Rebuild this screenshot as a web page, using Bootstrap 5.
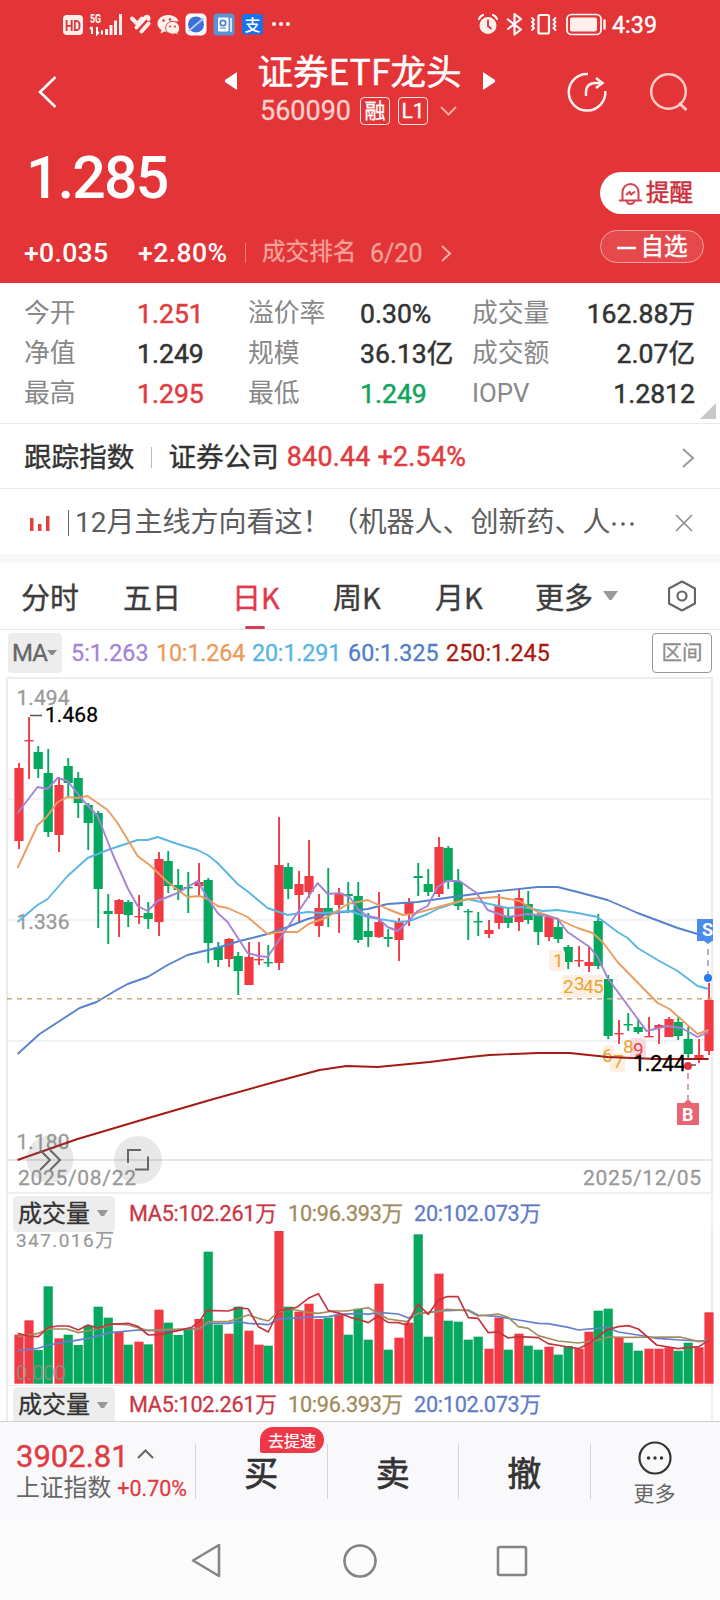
<!DOCTYPE html>
<html lang="zh-CN">
<head>
<meta charset="utf-8">
<meta name="viewport" content="width=device-width, initial-scale=1">
<title>证券ETF龙头 560090</title>
<link href="https://cdn.jsdelivr.net/npm/bootstrap@5.3.0/dist/css/bootstrap.min.css" rel="stylesheet">
<style>
  :root { --rise:#e33437; --up:#f23a44; --down:#04a95f; --ink:#333; --dim:#888; --line:#e9e9ea; }
  body { width:720px; height:1600px; overflow:hidden; background:#fff; color:var(--ink);
         font-family:Roboto,"Noto Sans CJK SC",sans-serif; line-height:1; white-space:nowrap; }
  svg { display:block; flex:none; }
  .quote-head { height:283px; background:var(--rise); }
  .statusbar { height:48px; padding-left:55px; }
  .titlebar { height:85px; }
  .etf-name { font:400 35.6px/42px "Noto Sans CJK SC",sans-serif; -webkit-text-stroke:.5px currentColor; }
  .etf-code { font-size:27px; color:#ffd0cc; -webkit-text-stroke:.3px currentColor; }
  .tagbox { width:30px; height:28px; border:1px solid #ffe3e0; border-radius:4px; font-size:21px; -webkit-text-stroke:.3px currentColor; }
  .last-price { font-size:59px; font-weight:500; letter-spacing:-1.8px; line-height:60px; }
  .chg { font-size:26.6px; font-weight:500; }
  .rank { font-size:23.6px; color:#f7a19b; -webkit-text-stroke:.3px currentColor; }
  .pill-remind { width:120px; height:42px; border-radius:21px 0 0 21px; color:#c8313b; font-size:23.5px; -webkit-text-stroke:.5px currentColor; }
  .pill-fav { width:104px; height:33px; border:1px solid #f3a4a2; background:#e5494c; border-radius:17px; font-size:23.5px; -webkit-text-stroke:.5px currentColor; }
  .stats { height:141px; padding:11px 25px 0 24px; border-bottom:1px solid var(--line); grid-template-columns:113px 111px 112px 112px 1fr; grid-auto-rows:40px; }
  .stats > * { font-size:25.8px; }
  .stats .lbl { color:var(--dim); }
  .stats .val { font-size:26.6px; }
  .stats .val, .idx-val { font-weight:400; -webkit-text-stroke:.5px currentColor; }
  .rise { color:#e23b3f; } .fall { color:#12a35d; }
  .indexrow { height:65px; padding:3px 26px 0 24px; border-bottom:1px solid var(--line); font-size:27.6px; -webkit-text-stroke:.4px currentColor; }
  .newsrow { height:65px; padding:2px 27px 0 29px; font-size:28px; color:#5c5c5c; }
  .band { height:9px; background:#f7f7f8; }
  .tabs { height:67px; border-bottom:1px solid var(--line); font:400 29px/1 "Noto Sans CJK SC",sans-serif; color:#3d3d3d; -webkit-text-stroke:.4px currentColor;
          display:grid; grid-template-columns:101px 101px 100px 100px 101px 133px 1fr; padding-left:21px; }
  .tabs .on { color:#e2394a; position:relative; }
  .tabs .on::after { content:""; position:absolute; left:22px; bottom:0; width:20px; height:3px; border-radius:2px; background:#cf4258; }
  .marow { height:47px; padding:0 8px 1px; font-size:23.2px; letter-spacing:-.1px; }
  .marow > span { -webkit-text-stroke:.3px currentColor; }
  .mabox { width:54px; height:40px; background:#ededed; border-radius:4px; color:#666; font-size:24px; letter-spacing:-.8px; }
  .zonebox { width:60px; height:40px; border:1px solid #999; border-radius:4px; color:#8c8c8c; font-size:20.5px; }
  .volhead { height:37px; padding-left:13px; padding-top:2px; margin:0 7px 0 6px; border-left:2px solid #eee; border-right:2px solid #eee; font-size:21.6px; letter-spacing:-.25px; -webkit-text-stroke:.3px currentColor; }
  .volbox { width:102px; height:36px; background:#ededed; border-radius:4px; font-size:24px; padding-left:5px; letter-spacing:0; margin-left:-8px; }
  .tradebar { height:100px; background:#f9f9fc; border-top:1px solid #d0d0d2; }
  .tradebar .cell { width:131.5px; border-left:1px solid #d5d5d9; height:55px; font:400 34px/1 "Noto Sans CJK SC",sans-serif; -webkit-text-stroke:.7px currentColor; }
  .tradebar .cell .thin { -webkit-text-stroke:0; }
  .speedtag { position:absolute; left:64px; top:-17px; width:64px; height:26px; background:#ee3747; border-radius:13px 13px 13px 2px; color:#fff; font-size:16px; -webkit-text-stroke:.2px currentColor; }
  .sysnav { height:79px; background:#fcfcfc; }
  svg text { font-family:Roboto,"Noto Sans CJK SC",sans-serif; }
</style>
</head>
<body>
<header class="quote-head text-white d-flex flex-column">
  <div class="statusbar d-flex">
    <svg width="250" height="48" viewBox="55 0 250 48">
      <rect x="63" y="15" width="20" height="20" rx="4" fill="#fff0ec"/>
      <text x="65" y="30.500" font-size="14.500" font-weight="700" fill="#d9363a" textLength="16" lengthAdjust="spacingAndGlyphs">HD</text>
      <text x="90" y="23" font-size="12" font-weight="700" fill="#fff" textLength="11" lengthAdjust="spacingAndGlyphs">5G</text>
      <g stroke="#fff" fill="none" stroke-width="2"><path d="M92 27v7M90 29l2-2M97 27v7l2-2M102 30.500v4"/><path stroke-width="3" d="M106.500 29v6M111 25v10M115.500 20.500v14.500M120.500 14v21" opacity=".92"/></g>
      <g fill="none" stroke="#fff0ec" stroke-width="4" stroke-linecap="round" stroke-linejoin="round"><path d="M132 18.500l5.500 5.500 4.500-5.500M136.500 27.500l9-10q3-2 3 1.500M141.500 31.500l7-8"/></g>
      <g fill="#fff0ec"><path d="M168 15c-6 0-10.500 4-10.500 8.500 0 3 1.500 5 4 6.500l-1 3.500 4-2q2 .5 3.500 .3c-1-6 3-10.500 10.500-10.500-1-4-5.500-6.300-10.500-6.300z"/><path stroke="#e33437" stroke-width="1" d="M171.500 21.500c-7 1-8.500 11 0 12.500 2 .5 3 0 4-.300l3 1.500-.700-2.500c5-4 0-12.500-6.300-11.200z"/><circle cx="163.500" cy="20.500" r="1.300" fill="#d9363a"/><circle cx="170" cy="19.500" r="1.300" fill="#d9363a"/><circle cx="170" cy="26.500" r="1" fill="#d9363a"/><circle cx="175" cy="26.500" r="1" fill="#d9363a"/></g>
      <rect x="185.500" y="13.500" width="21" height="22" rx="5" fill="#fff"/><circle cx="196" cy="24.500" r="8" fill="#3f70d8"/><path d="M188.500 31l15.500-13" stroke="#b4c9f3" stroke-width="1.800"/>
      <rect x="213.500" y="13.500" width="21" height="22" rx="3.500" fill="#5b93d6"/><rect x="218" y="17.500" width="10.500" height="14" rx="1" fill="#fff"/><circle cx="223" cy="23" r="2.700" fill="none" stroke="#4a7fc9" stroke-width="1.700"/><path d="M220 28h6" stroke="#4a7fc9"/><path d="M231 18v14" stroke="#fff" stroke-width="1.500"/>
      <rect x="242" y="14" width="21" height="20.500" rx="2.500" fill="#1672ed"/><text x="244.500" y="30.500" font-size="16" font-weight="500" fill="#fff">支</text>
      <g fill="#fff"><circle cx="274" cy="24" r="2"/><circle cx="281" cy="24" r="2"/><circle cx="288" cy="24" r="2"/></g>
    </svg>
    <svg class="ms-auto" width="260" height="48" viewBox="460 0 260 48">
      <g fill="none" stroke="#fff" stroke-width="2.200" stroke-linecap="round">
        <circle cx="488" cy="25.500" r="8.500" fill="#fff0ec" stroke="none"/><path d="M488 20.500v5.500l3 2.500" stroke="#d9363a" stroke-width="1.800"/>
        <path d="M479 19q1-3 4-4M497 19q-1-3-4-4"/>
        <path d="M508 19.500l13 10-6.500 5V14l6.500 5-13 10" stroke-linejoin="round"/>
        <rect x="538.500" y="15" width="10.500" height="18.500" rx="1.500"/>
        <path stroke-width="1.800" d="M532 18l2 2-2 2 2 2-2 2 2 2-2 2M555.500 18l-2 2 2 2-2 2 2 2-2 2 2 2"/>
        <rect x="567" y="14.500" width="34" height="20" rx="4.500" stroke-width="1.700"/><path d="M604.500 20.500v8" stroke-width="2.400"/>
      </g>
      <rect x="570" y="17.500" width="27" height="14" rx="2" fill="#fff0ec"/>
      <text x="612" y="33" font-size="24" font-weight="400" fill="#fff" stroke="#fff" stroke-width=".4" textLength="45" lengthAdjust="spacingAndGlyphs">4:39</text>
    </svg>
  </div>
  <div class="titlebar d-flex">
    <svg width="180" height="85" viewBox="0 48 180 85" fill="none" stroke="#fff" stroke-width="2.600"><path d="M55.500 77L40 92 55.500 107"/></svg>
    <div class="d-flex flex-column align-items-center" style="width:360px">
      <div class="d-flex align-items-center justify-content-center">
        <svg width="12" height="18" style="margin-top:22px" viewBox="0 0 12 18"><path d="M12 0v18L0 10V8z" fill="#fff"/></svg>
        <span class="etf-name" style="margin:1px 21px 0 20px">证券ETF龙头</span>
        <svg width="12" height="18" style="margin-top:22px" viewBox="0 0 12 18"><path d="M0 0v18L12 10V8z" fill="#fff"/></svg>
      </div>
      <div class="d-flex align-items-center" style="margin-top:6px;margin-left:-3px">
        <span class="etf-code">560090</span>
        <span class="tagbox d-flex align-items-center justify-content-center" style="margin-left:9px">融</span>
        <span class="tagbox d-flex align-items-center justify-content-center" style="margin-left:8px">L1</span>
        <svg width="17" height="10" viewBox="0 0 17 10" style="margin-left:12px" fill="none" stroke="#f7aaa5" stroke-width="2"><path d="M1 1l7.500 7.500L16 1"/></svg>
      </div>
    </div>
    <svg width="180" height="85" viewBox="540 48 180 85" fill="none" stroke="#fff0ee" stroke-width="2.500">
      <path d="M588 74a18.300 18.300 0 1 0 17.300 17"/><path d="M586 96v-4q0-8.500 9-9h7.500M596 78l6.500 5-6.500 5"/>
      <g stroke="#ffccc6"><circle cx="668.500" cy="91.500" r="17.300"/><path d="M679 103l7.500 7" stroke-width="3"/></g>
    </svg>
  </div>
  <div class="d-flex flex-grow-1">
    <div class="d-flex flex-column">
      <div class="last-price" style="margin:15px 0 0 26px">1.285</div>
      <div class="d-flex align-items-center" style="margin:30px 0 0 24px;height:30px">
        <span class="chg" style="width:114px;letter-spacing:.3px">+0.035</span>
        <span class="chg" style="width:107px;letter-spacing:.4px">+2.80%</span>
        <span style="width:17px;height:20px;border-left:1px solid #ef7f7d"></span>
        <span class="rank" style="width:108px">成交排名</span>
        <span class="rank" style="width:71px;font-size:25px">6/20</span>
        <svg width="11" height="17" viewBox="0 0 11 17" fill="none" stroke="#f9b0ab" stroke-width="2"><path d="M1 1l8 7.500L1 16"/></svg>
      </div>
    </div>
    <div class="ms-auto" style="padding-top:39px">
      <div class="pill-remind bg-white d-flex align-items-center">
        <svg width="23" height="23" viewBox="0 0 23 23" style="margin:0 4px 0 19px" fill="none" stroke="#d4434c" stroke-width="2"><path d="M3.500 18v-8a8 8 0 0 1 16 0v8M0 18.500h23M7.500 19q1 3 4 3t4-3"/><path d="M7 13l3.500-3 1.500 2.500 4-3"/></svg><span style="margin-top:2px">提醒</span></div>
      <div class="pill-fav d-flex align-items-center justify-content-center" style="margin-top:16px;padding-top:2px"><svg width="20" height="4" style="margin-right:4px"><path d="M0 2h19" stroke="#fff" stroke-width="2.500"/></svg>自选</div>
    </div>
  </div>
</header>

<section class="stats d-grid position-relative align-items-center" >
  <span class="lbl">今开</span><span class="val rise">1.251</span><span class="lbl">溢价率</span><span class="val">0.30%</span><span class="lbl d-flex justify-content-between">成交量<b class="val text-end" style="color:var(--ink)">162.88万</b></span>
  <span class="lbl">净值</span><span class="val">1.249</span><span class="lbl">规模</span><span class="val">36.13亿</span><span class="lbl d-flex justify-content-between">成交额<b class="val" style="color:var(--ink)">2.07亿</b></span>
  <span class="lbl">最高</span><span class="val rise">1.295</span><span class="lbl">最低</span><span class="val fall">1.249</span><span class="lbl d-flex justify-content-between">IOPV<b class="val" style="color:var(--ink)">1.2812</b></span>
  <svg class="position-absolute" style="right:4px;bottom:4px" width="16" height="16"><path d="M16 0v16H0z" fill="#c8c8c8"/></svg>
</section>

<section class="indexrow d-flex align-items-center">
  <span>跟踪指数</span><span style="height:21px;border-left:1px solid #bbb;margin:0 16px 0 17px"></span><span>证券公司</span>
  <span class="idx-val rise" style="margin-left:8px;font-size:26.8px;letter-spacing:.25px">840.44 +2.54%</span>
  <svg class="ms-auto" width="12" height="20" viewBox="0 0 12 20" fill="none" stroke="#999" stroke-width="2"><path d="M1 1l10 9L1 19"/></svg>
</section>
<section class="newsrow d-flex align-items-center">
  <svg width="40" height="28" viewBox="0 0 40 28" class="me-1"><g fill="#e0403f"><rect x="1" y="9" width="3.500" height="13"/><rect x="9" y="15" width="3.500" height="7"/><rect x="17" y="7" width="3.500" height="15"/></g><path d="M40 1v26" stroke="#666" stroke-width="2"/></svg>
  <span style="margin-left:2px">12月主线方向看这！（机器人、创新药、人<svg class="d-inline-block align-middle" width="26" height="6"><g fill="#5c5c5c"><circle cx="4" cy="3" r="1.800"/><circle cx="13" cy="3" r="1.800"/><circle cx="22" cy="3" r="1.800"/></g></svg></span>
  <svg class="ms-auto" width="18" height="18" viewBox="0 0 18 18" stroke="#8c8c8c" stroke-width="1.600"><path d="M1 1l16 16M17 1L1 17"/></svg>
</section>
<div class="band"></div>

<nav class="tabs align-items-stretch">
  <span class="d-flex align-items-center">分时</span><span class="d-flex align-items-center" style="padding-left:1px">五日</span>
  <span class="on d-flex align-items-center" style="padding-left:9px">日K</span>
  <span class="d-flex align-items-center" style="padding-left:10px">周K</span>
  <span class="d-flex align-items-center" style="padding-left:12px">月K</span>
  <span class="d-flex align-items-center" style="padding-left:11px">更多<svg width="15" height="10" style="margin-left:10px"><path d="M0 0h15L8.500 9h-2z" fill="#999"/></svg></span>
  <span class="d-flex align-items-center" style="padding-left:11px"><svg width="28" height="32" viewBox="0 0 28 32" fill="none" stroke="#666" stroke-width="2.200" stroke-linejoin="round"><path d="M14 1.500L27 8.500v15l-13 7-13-7v-15z"/><circle cx="14" cy="16" r="4.500"/></svg></span>
</nav>
<div class="marow d-flex align-items-center">
  <span class="mabox d-flex align-items-center" style="padding-left:4px">MA<svg width="10" height="6"><path d="M0 0h10L6 5H4z" fill="#888"/></svg></span>
  <span style="color:#a584d6;width:85px;margin-left:9px;padding-top:2px;letter-spacing:.1px">5:1.263</span><span style="color:#eb9a5a;width:96px;padding-top:2px">10:1.264</span><span style="color:#54b5e4;width:96px;padding-top:2px">20:1.291</span><span style="color:#517dcb;width:98px;padding-top:2px;letter-spacing:.1px">60:1.325</span><span style="color:#aa180e;padding-top:2px;letter-spacing:.1px">250:1.245</span>
  <span class="zonebox ms-auto d-flex align-items-center justify-content-center">区间</span>
</div>

<svg id="price" width="720" height="517" viewBox="0 677 720 517">
  <g fill="none" stroke="#ececee" stroke-width="2"><path d="M6 678H713M7 678V1194M712 678V1194"/><path d="M8 1160H712" stroke="#e4e4e4"/><path d="M8 799H712M8 920H712M8 1041H712" stroke="#f1f2f6"/><path d="M8 1193H712" stroke="#f0f0f0"/></g>
  <g fill="#999" font-size="21" stroke="#999" stroke-width=".3"><text x="16.500" y="705" textLength="53">1.494</text><text x="16.500" y="929" textLength="53">1.336</text><text x="16.500" y="1149" textLength="53">1.180</text>
    <text x="18" y="1185" textLength="118">2025/08/22</text><text x="583" y="1185" textLength="118">2025/12/05</text></g>
  <g id="candles"></g>
  <g font-size="19" fill="#eba435"><g fill="#fdf0e2"><rect x="549" y="950" width="16" height="21" rx="3"/><rect x="562" y="975" width="42" height="22" rx="3"/><rect x="603" y="1045" width="12" height="18" rx="3"/><rect x="610" y="1053" width="15" height="19" rx="3"/></g>
    <rect x="630" y="1038" width="16" height="20" rx="3" fill="#fbdcdc"/>
    <text x="553" y="967">1</text><text x="563" y="993">2</text><text x="574" y="990">3</text><text x="583" y="993">4</text><text x="593" y="993">5</text><text x="602" y="1062">6</text><text x="613" y="1068">7</text><text x="623" y="1053">8</text><text x="633" y="1056" fill="#e34258">9</text></g>
  <g fill="none" stroke-width="1.900" stroke-linejoin="round" transform="translate(-.4 0)">
    <polyline stroke="#a31b12" points="18,1160 78,1139 142,1120 214,1099 275,1082 320,1070 347,1066 378,1067 430,1062 470,1057 490,1055 538,1053 570,1053 608,1057 657,1059 709,1059"/>
    <polyline stroke="#5582cc" points="18,1054 40,1034 60,1021 80,1008 97,1002 117,990 128,984 148,977 168,965 188,955 200,952 217,948 240,941 268,934 288,927 308,919 328,914 368,909 388,904 418,902 453,897 490,892 538,887 558,887 578,892 608,900 638,913 678,928 698,934"/>
    <polyline stroke="#5ab6e2" points="18,922 38,905 48,899 68,876 88,858 108,850 138,840 148,840 158,837 178,844 198,850 208,855 218,863 238,884 250,893 268,908 288,915 308,912 323,913 350,911 368,917 398,922 410,921 428,914 440,908 468,899 490,904 508,908 523,907 543,911 558,910 578,913 598,917 618,932 628,938 638,948 658,960 678,971 698,986 709,989"/>
    <polyline stroke="#eb9c5f" points="18,868 38,825 47,817 58,802 68,797 78,798 88,796 108,810 118,823 138,856 150,865 168,882 188,897 200,896 208,899 218,906 228,908 248,917 268,934 280,932 298,932 309,924 328,917 348,904 368,900 388,909 403,915 413,914 428,910 468,899 498,897 520,901 538,912 558,919 578,928 593,933 603,942 618,962 658,1003 670,1009 698,1034 709,1030"/>
    <polyline stroke="#a483d7" points="18,813 38,787 48,789 58,778 68,781 83,800 98,816 113,854 128,888 138,906 148,911 158,901 178,893 198,881 208,898 218,913 228,922 248,953 259,956 268,957 318,883 328,894 340,893 350,897 359,910 368,916 378,918 388,927 398,931 408,922 418,911 428,906 438,887 447,881 460,881 477,893 488,910 508,917 528,914 548,916 558,919 568,932 590,947 598,957 608,978 647,1031 668,1026 682,1028 698,1037 709,1032"/>
  </g>
  <path d="M7 998.700H712" stroke="#c6aa79" stroke-width="1.600" stroke-dasharray="5 5"/>
  <path d="M30 715.500h12" stroke="#555" stroke-width="1.500"/>
  <text x="45" y="722" font-size="21" fill="#000" stroke="#000" stroke-width=".3" textLength="53">1.468</text>
  <text x="633" y="1070.500" font-size="22" fill="#000" stroke="#000" stroke-width=".3" textLength="53">1.244</text>
  <path d="M687 1065h9" stroke="#555" stroke-width="1.500"/>
  <g stroke-width="1.600" stroke-dasharray="6 5"><path d="M708 949v25" stroke="#94a0c5"/><path d="M688 1073v26" stroke="#cf8b96"/></g>
  <circle cx="708" cy="978" r="4" fill="#2879ea"/><circle cx="688" cy="1066" r="4" fill="#dd3440"/>
  <path d="M697 919h16v22h-1l-4 3-4-3h-7z" fill="#4b8bed"/><clipPath id="edge"><path d="M690 910h23v40h-23z"/></clipPath><text clip-path="url(#edge)" x="702" y="936" font-size="18" font-weight="700" fill="#fff">S</text>
  <path d="M677 1103h7l4-4 4 4h7v22h-22z" fill="#e96572"/><text x="682" y="1121" font-size="18" font-weight="700" fill="#fff">B</text>
  <g fill="#777" fill-opacity=".17"><circle cx="50" cy="1159" r="23.500"/><circle cx="138" cy="1160" r="24"/></g>
  <g fill="none" stroke="#666" stroke-width="2"><path d="M40 1150l10 10-10 10M50 1150l10 10-10 10M128 1163v-13h13M135 1169.500h13v-13"/></g>
</svg>

<div class="volhead d-flex align-items-center">
  <span class="volbox d-flex align-items-center">成交量<svg width="11" height="7" style="margin-left:7px"><path d="M0 0h11L7 6H4z" fill="#999"/></svg></span>
  <span style="color:#c93646;width:159px;margin-left:14px">MA5:102.261万</span><span style="color:#a18b5c;width:126px">10:96.393万</span><span style="color:#607bc9">20:102.073万</span>
</div>
<svg id="volume" width="720" height="154" viewBox="0 1231 720 154">
  <path d="M7 1231V1385M712 1231V1385" stroke="#ececee" stroke-width="2"/>
  <text x="16" y="1247" font-size="19" fill="#999" stroke="#999" stroke-width=".2" textLength="98">347.016万</text>
  <g id="bars"></g>
  <text x="16" y="1380" font-size="21" fill="#8d8d82" fill-opacity=".85" textLength="50">0.000</text>
  <g transform="translate(0 1120) scale(.33333)" fill="none" stroke-width="5" stroke-linejoin="round">
    <polyline stroke="#657fce" points="53,692 115,685 145,675 205,665 264,655 330,638 415,630 480,632 600,625 625,610 685,610 715,605 745,610 805,614 835,597 925,592 985,590 1020,583 1080,580 1105,583 1134,577 1195,582 1225,594 1254,582 1315,573 1405,570 1434,585 1495,590 1555,600 1615,610 1644,611 1705,622 1735,630 1820,622 1855,636 1914,645 1970,655 2040,660 2097,663 2127,660"/>
    <polyline stroke="#a38d60" points="53,650 85,645 115,640 145,627 200,627 235,638 294,627 340,612 385,615 445,632 500,628 560,627 600,625 625,605 685,605 745,585 775,595 805,603 835,575 870,567 925,577 955,580 1000,573 1040,573 1080,567 1105,563 1134,580 1164,597 1220,605 1254,580 1315,575 1340,568 1405,572 1434,588 1495,582 1525,592 1555,620 1585,625 1615,647 1674,663 1735,669 1795,660 1825,651 1880,652 2040,651 2097,665 2127,662"/>
    <polyline stroke="#c5343d" points="53,640 85,648 115,650 145,622 175,618 205,618 235,630 264,615 294,625 330,613 385,610 415,620 445,645 480,643 535,632 575,622 600,602 620,571 685,573 715,563 745,567 775,620 805,636 835,573 890,562 925,535 955,521 985,572 1020,580 1050,592 1080,600 1105,608 1134,588 1164,607 1195,608 1220,615 1254,553 1285,583 1315,540 1340,530 1374,530 1405,593 1434,595 1465,638 1495,636 1525,654 1555,650 1615,653 1644,671 1705,681 1735,686 1765,672 1820,630 1855,620 1885,617 1915,627 1970,675 2034,686 2097,680 2127,660"/>
  </g>
</svg>
<div class="volhead d-flex align-items-center" style="height:36px;border-top:1px solid #eee;padding-top:3px">
  <span class="volbox d-flex align-items-center">成交量<svg width="11" height="7" style="margin-left:7px"><path d="M0 0h11L7 6H4z" fill="#999"/></svg></span>
  <span style="color:#c93646;width:159px;margin-left:14px">MA5:102.261万</span><span style="color:#a18b5c;width:126px">10:96.393万</span><span style="color:#607bc9">20:102.073万</span>
</div>

<footer class="tradebar d-flex align-items-start position-relative" style="padding-top:22px">
  <div style="width:195px;padding-left:16px;flex:none">
    <div class="rise d-flex align-items-center" style="font-size:31px;height:24px;margin-top:0;-webkit-text-stroke:.4px currentColor">3902.81<svg width="17" height="10" viewBox="0 0 17 10" style="margin-left:8px;margin-top:-4px" fill="none" stroke="#666" stroke-width="2"><path d="M1 9l7.500-7.500L16 9"/></svg></div>
    <div class="d-flex align-items-center" style="font-size:23.8px;height:26px;margin-top:8px;color:#666">上证指数<span class="rise" style="font-size:21.500px;margin-left:6px;-webkit-text-stroke:.3px currentColor">+0.70%</span></div>
  </div>
  <div class="cell position-relative d-flex align-items-center justify-content-center">买<span class="speedtag d-flex align-items-center justify-content-center">去提速</span></div>
  <div class="cell d-flex align-items-center justify-content-center">卖</div>
  <div class="cell d-flex align-items-center justify-content-center">撤</div>
  <div class="cell d-flex flex-column align-items-center" style="width:129px">
    <svg width="34" height="34" style="margin-top:-3px;flex:none" viewBox="0 0 34 34"><circle cx="17" cy="17" r="15.500" fill="none" stroke="#333" stroke-width="2.200"/><g fill="#333"><circle cx="10.500" cy="17" r="1.700"/><circle cx="17" cy="17" r="1.700"/><circle cx="23.500" cy="17" r="1.700"/></g></svg>
    <span class="thin" style="font-size:21px;margin-top:7px;color:#666">更多</span>
  </div>
</footer>
<div class="sysnav d-flex align-items-center">
  <svg width="720" height="79" viewBox="0 1521 720 79" fill="none" stroke="#858585" stroke-width="2.600" stroke-linejoin="round"><path d="M219 1545v31l-26-15.500z"/><circle cx="360" cy="1561" r="15.500"/><rect x="498" y="1547" width="28" height="28" rx="1.500"/></svg>
</div>

<script src="https://cdn.jsdelivr.net/npm/bootstrap@5.3.0/dist/js/bootstrap.bundle.min.js"></script>
<script>
// one entry per trading day: direction, high, body top, body bottom, low
const days = `r763,768,841,849 r717,740,741,779 g746,752,769,778 g749,773,832,837 r777,785,835,852 g758,766,783,796 g772,778,803,818 g803,805,823,850 g811,813,889,928 g894,911,914,944
r899,900,914,937 g900,902,915,927 r895,916,917,924 g902,913,919,929 r852,859,922,936 g851,861,886,893 g869,885,890,900 g872,887,888,913 r863,882,886,896 g878,880,943,963
g942,947,960,967 r938,939,959,967 g952,956,971,995 r942,957,985,985 r942,959,960,965 g945,962,963,967 r817,865,963,970 g863,867,889,899 r871,884,895,923 r840,876,892,898
r894,908,926,937 g868,908,915,927 r888,893,905,933 g882,894,896,913 g882,896,940,943 g913,931,937,947 r892,922,937,938 g929,937,939,947 r918,922,940,961 r898,902,914,926
g863,876,878,896 g869,884,892,896 r837,847,894,897 g846,848,882,889 g869,882,906,910 g909,911,912,940 g912,921,922,936 r920,930,934,938 r894,906,923,929 g907,917,923,928
r889,898,922,931 g891,904,920,924 g912,914,932,945 r915,917,937,941 g918,927,939,943 g945,947,962,969 r946,960,961,967 r946,962,966,972 g914,921,966,969 g975,979,1036,1039
r1020,1033,1034,1044 g1013,1024,1025,1031 g1019,1027,1032,1034 r1017,1036,1037,1037 r1024,1025,1028,1044 r1017,1019,1037,1037 g1016,1022,1036,1040 g1027,1039,1054,1060 r1039,1055,1059,1063 r983,1000,1051,1055`.split(/\s+/);
const vol = [644,601,690,499,655,644,675,617,560,593,636,674,665,673,569,608,645,628,597,395,614,641,560,632,674,677,331,560,575,551,597,593,584,644,566,659,491,689,653,608,343,650,461,602,605,659,650,686,593,689,641,677,689,680,704,678,686,635,572,566,653,668,692,686,686,682,692,668,682,577];
let c = '', b = '';
days.forEach((d, i) => {
  const [h, t, m, l] = d.slice(1).split(',').map(Number);
  const up = d[0] === 'r', x = (up ? 19 : 18.2) + i * 10, w = 9.2, f = up ? '#f23a44' : '#04a95f';
  c += `<rect x="${x-.9}" y="${h}" width="1.9" height="${l-h}" fill="${f}"/><rect x="${x-4.6}" y="${t}" width="${w}" height="${Math.max(m-t,1.4)}" fill="${f}"/>`;
  const y = 1120 + vol[i] / 3;
  b += `<rect x="${x-4.6}" y="${y}" width="${w}" height="${1383.7-y}" fill="${f}"/>`;
});
document.getElementById('candles').innerHTML = c;
document.getElementById('bars').innerHTML = b;
</script>
</body>
</html>
